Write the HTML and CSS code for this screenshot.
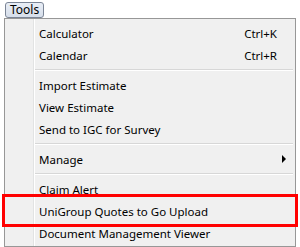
FILE: index.html
```html
<!DOCTYPE html>
<html lang="en">
<head>
  <meta charset="UTF-8" />
  <title>Tools menu</title>
  <link rel="stylesheet" href="styles.css">
</head>
<body>
  <div class="menubar">
    <span class="menu-title">Tools</span>
  </div>

  <div class="menu">
    <div class="item"><span>Calculator</span><span class="key">Ctrl+K</span></div>
    <div class="item"><span>Calendar</span><span class="key">Ctrl+R</span></div>
    <div class="sep"></div>
    <div class="item"><span>Import Estimate</span></div>
    <div class="item"><span>View Estimate</span></div>
    <div class="item"><span>Send to IGC for Survey</span></div>
    <div class="sep"></div>
    <div class="item"><span>Manage</span><span class="arrow"></span></div>
    <div class="sep"></div>
    <div class="item"><span>Claim Alert</span></div>
    <div class="item highlight"><span>UniGroup Quotes to Go Upload</span></div>
    <div class="item"><span>Document Management Viewer</span></div>
  </div>
</body>
</html>
```

FILE: styles.css
```css
body {
  margin: 0;
  background: #ffffff;
  font-family: "Segoe UI", "Noto Sans", sans-serif;
  font-size: 11.5px;
  color: #000;
}

.menubar {
  padding: 2px 0 0 5px;
  height: 16px;
}

.menu-title {
  display: inline-block;
  box-sizing: border-box;
  height: 16px;
  padding: 0 4px;
  line-height: 14px;
  font-size: 12px;
  border: 1px solid #7b8596;
  border-radius: 3px;
  background: linear-gradient(#e9eef6, #d6deea);
}

.menu {
  position: relative;
  margin-left: 4px;
  width: 292px;
  box-sizing: border-box;
  border: 1px solid #979797;
  background: #f0f0f0;
  padding: 3px 0 2px;
}

.menu::before {
  content: "";
  position: absolute;
  top: 0;
  bottom: 0;
  left: 28px;
  width: 1px;
  background: #e2e3e3;
  border-right: 1px solid #ffffff;
}

.item {
  position: relative;
  display: flex;
  justify-content: space-between;
  align-items: center;
  height: 22px;
  padding: 0 18px 0 34px;
}

.arrow {
  width: 0;
  height: 0;
  margin-right: -9px;
  border-top: 4px solid transparent;
  border-bottom: 4px solid transparent;
  border-left: 4px solid #000;
}

.sep {
  height: 1px;
  margin: 3px 2px 3px 30px;
  background: #d7d7d7;
  border-bottom: 1px solid #ffffff;
}

.highlight::after {
  content: "";
  position: absolute;
  top: -6px;
  bottom: -5px;
  left: -3px;
  right: -3px;
  border: 3px solid #ff0000;
}
```
